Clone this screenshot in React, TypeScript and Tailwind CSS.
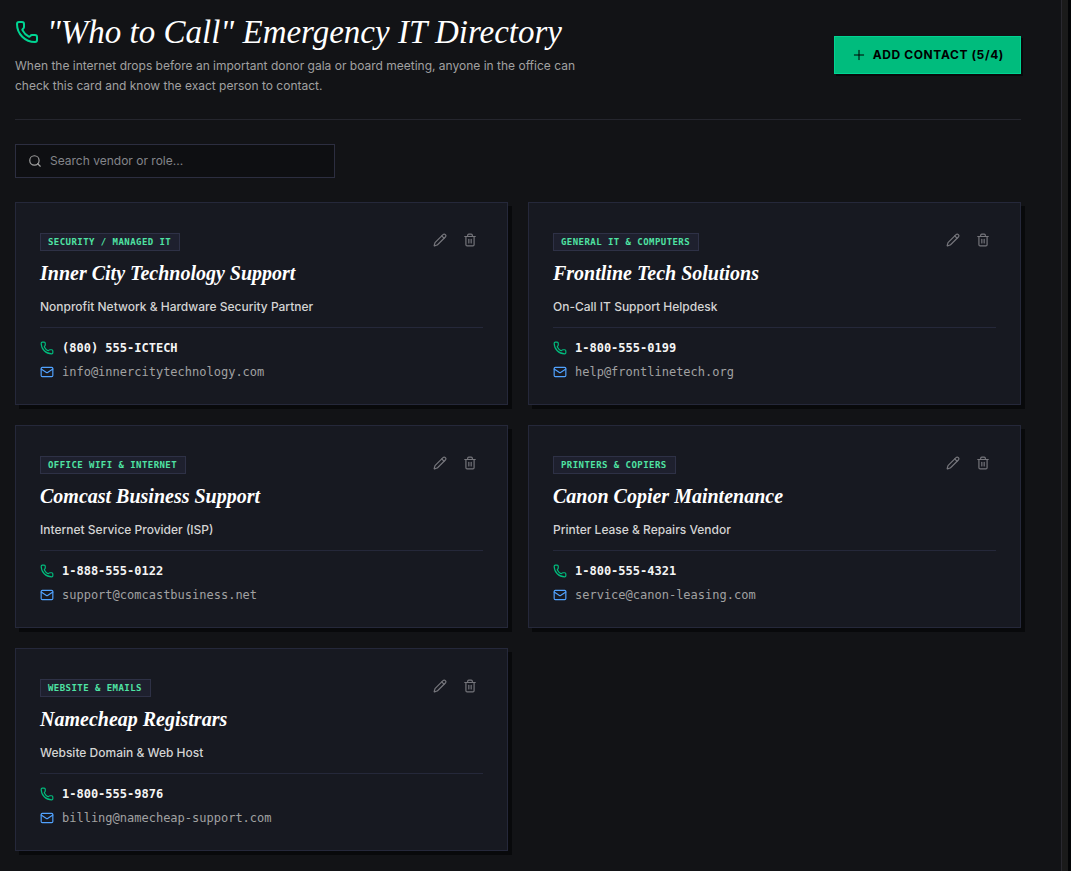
import { useState } from "react";
import { Mail, Pencil, Phone, Plus, Search, Trash2 } from "lucide-react";

interface Contact {
  category: string;
  name: string;
  role: string;
  phone: string;
  email: string;
}

const contacts: Contact[] = [
  {
    category: "Security / Managed IT",
    name: "Inner City Technology Support",
    role: "Nonprofit Network & Hardware Security Partner",
    phone: "(800) 555-ICTECH",
    email: "info@innercitytechnology.com",
  },
  {
    category: "General IT & Computers",
    name: "Frontline Tech Solutions",
    role: "On-Call IT Support Helpdesk",
    phone: "1-800-555-0199",
    email: "help@frontlinetech.org",
  },
  {
    category: "Office Wifi & Internet",
    name: "Comcast Business Support",
    role: "Internet Service Provider (ISP)",
    phone: "1-888-555-0122",
    email: "support@comcastbusiness.net",
  },
  {
    category: "Printers & Copiers",
    name: "Canon Copier Maintenance",
    role: "Printer Lease & Repairs Vendor",
    phone: "1-800-555-4321",
    email: "service@canon-leasing.com",
  },
  {
    category: "Website & Emails",
    name: "Namecheap Registrars",
    role: "Website Domain & Web Host",
    phone: "1-800-555-9876",
    email: "billing@namecheap-support.com",
  },
];

function ContactCard({ contact }: { contact: Contact }) {
  return (
    <article className="border border-[#25283a] bg-[#171921] p-6 shadow-[4px_4px_0_0_#08090b]">
      <div className="flex items-start justify-between">
        <div className="pt-1.5">
          <span className="block w-fit border border-[#2e3146] bg-[#1e202e] pr-2 pl-[7px] font-['DejaVu_Sans_Mono',monospace] text-[9px] leading-4 font-bold tracking-wider text-[#4fe3a3] uppercase">
            {contact.category}
          </span>
          <h3 className="mt-2 font-['Liberation_Serif',serif] text-xl leading-7 font-bold text-white italic">
            {contact.name}
          </h3>
        </div>
        <div className="flex gap-1 text-[#76767c]">
          <button type="button" aria-label={`Edit ${contact.name}`} className="p-1.5">
            <Pencil size={14} />
          </button>
          <button type="button" aria-label={`Delete ${contact.name}`} className="p-1.5">
            <Trash2 size={14} />
          </button>
        </div>
      </div>
      <p className="mt-3 text-xs font-medium text-[#d4d4d4]">{contact.role}</p>
      <div className="mt-3 flex flex-col items-start gap-2 border-t border-[#25283a] pt-3 font-['DejaVu_Sans_Mono',monospace] text-xs">
        <a href={`tel:${contact.phone}`} className="flex items-center gap-2 font-bold text-[#f5f5f5]">
          <Phone size={14} className="text-[#00bc7d]" />
          {contact.phone}
        </a>
        <a href={`mailto:${contact.email}`} className="flex items-center gap-2 text-[#a1a1a1]">
          <Mail size={14} className="text-[#51a2ff]" />
          {contact.email}
        </a>
      </div>
    </article>
  );
}

export default function App() {
  const [query, setQuery] = useState("");
  const term = query.toLowerCase();
  const visible = contacts.filter((c) =>
    `${c.name} ${c.role} ${c.category}`.toLowerCase().includes(term),
  );

  return (
    <div className="flex min-h-screen bg-[#030406] font-['Inter',sans-serif]">
      <main className="min-w-0 flex-1 border-r border-[#29282f] bg-[#121316] pt-3.5 pr-10 pb-5 pl-[15px]">
        <header className="flex items-center justify-between border-b border-[#25262e] pb-[23px]">
          <div>
            <h1 className="flex items-center gap-2 font-['Liberation_Serif',serif] text-[33px] leading-9 text-white italic">
              <Phone size={24} className="text-[#00d492]" />
              "Who to Call" Emergency IT Directory
            </h1>
            <p className="mt-1.5 max-w-xl text-xs leading-5 text-[#a1a1a1]">
              When the internet drops before an important donor gala or board meeting, anyone in the
              office can check this card and know the exact person to contact.
            </p>
          </div>
          <button
            type="button"
            className="flex h-[38px] shrink-0 items-center gap-1.5 border border-[#00d492] bg-[#00bc7d] px-4 text-xs font-bold tracking-wider text-black uppercase shadow-[2px_2px_0_0_#08090b]"
          >
            <Plus size={16} strokeWidth={1.5} />
            Add Contact (5/4)
          </button>
        </header>

        <label className="mt-6 flex w-80 items-center gap-2 border border-[#2c2e40] bg-[#0e0f12] px-3 py-2">
          <Search size={14} className="text-[#a1a1a1]" />
          <input
            type="text"
            aria-label="Search vendor or role"
            placeholder="Search vendor or role..."
            value={query}
            onChange={(e) => setQuery(e.target.value)}
            className="min-w-0 flex-1 bg-transparent text-xs text-white outline-none placeholder:text-[#84858a]"
          />
        </label>

        <section className="mt-6 grid grid-cols-2 gap-5">
          {visible.map((contact) => (
            <ContactCard key={contact.name} contact={contact} />
          ))}
        </section>
      </main>
      <div className="mr-[3px] w-1.5 bg-[#1a1a1a]" />
    </div>
  );
}
